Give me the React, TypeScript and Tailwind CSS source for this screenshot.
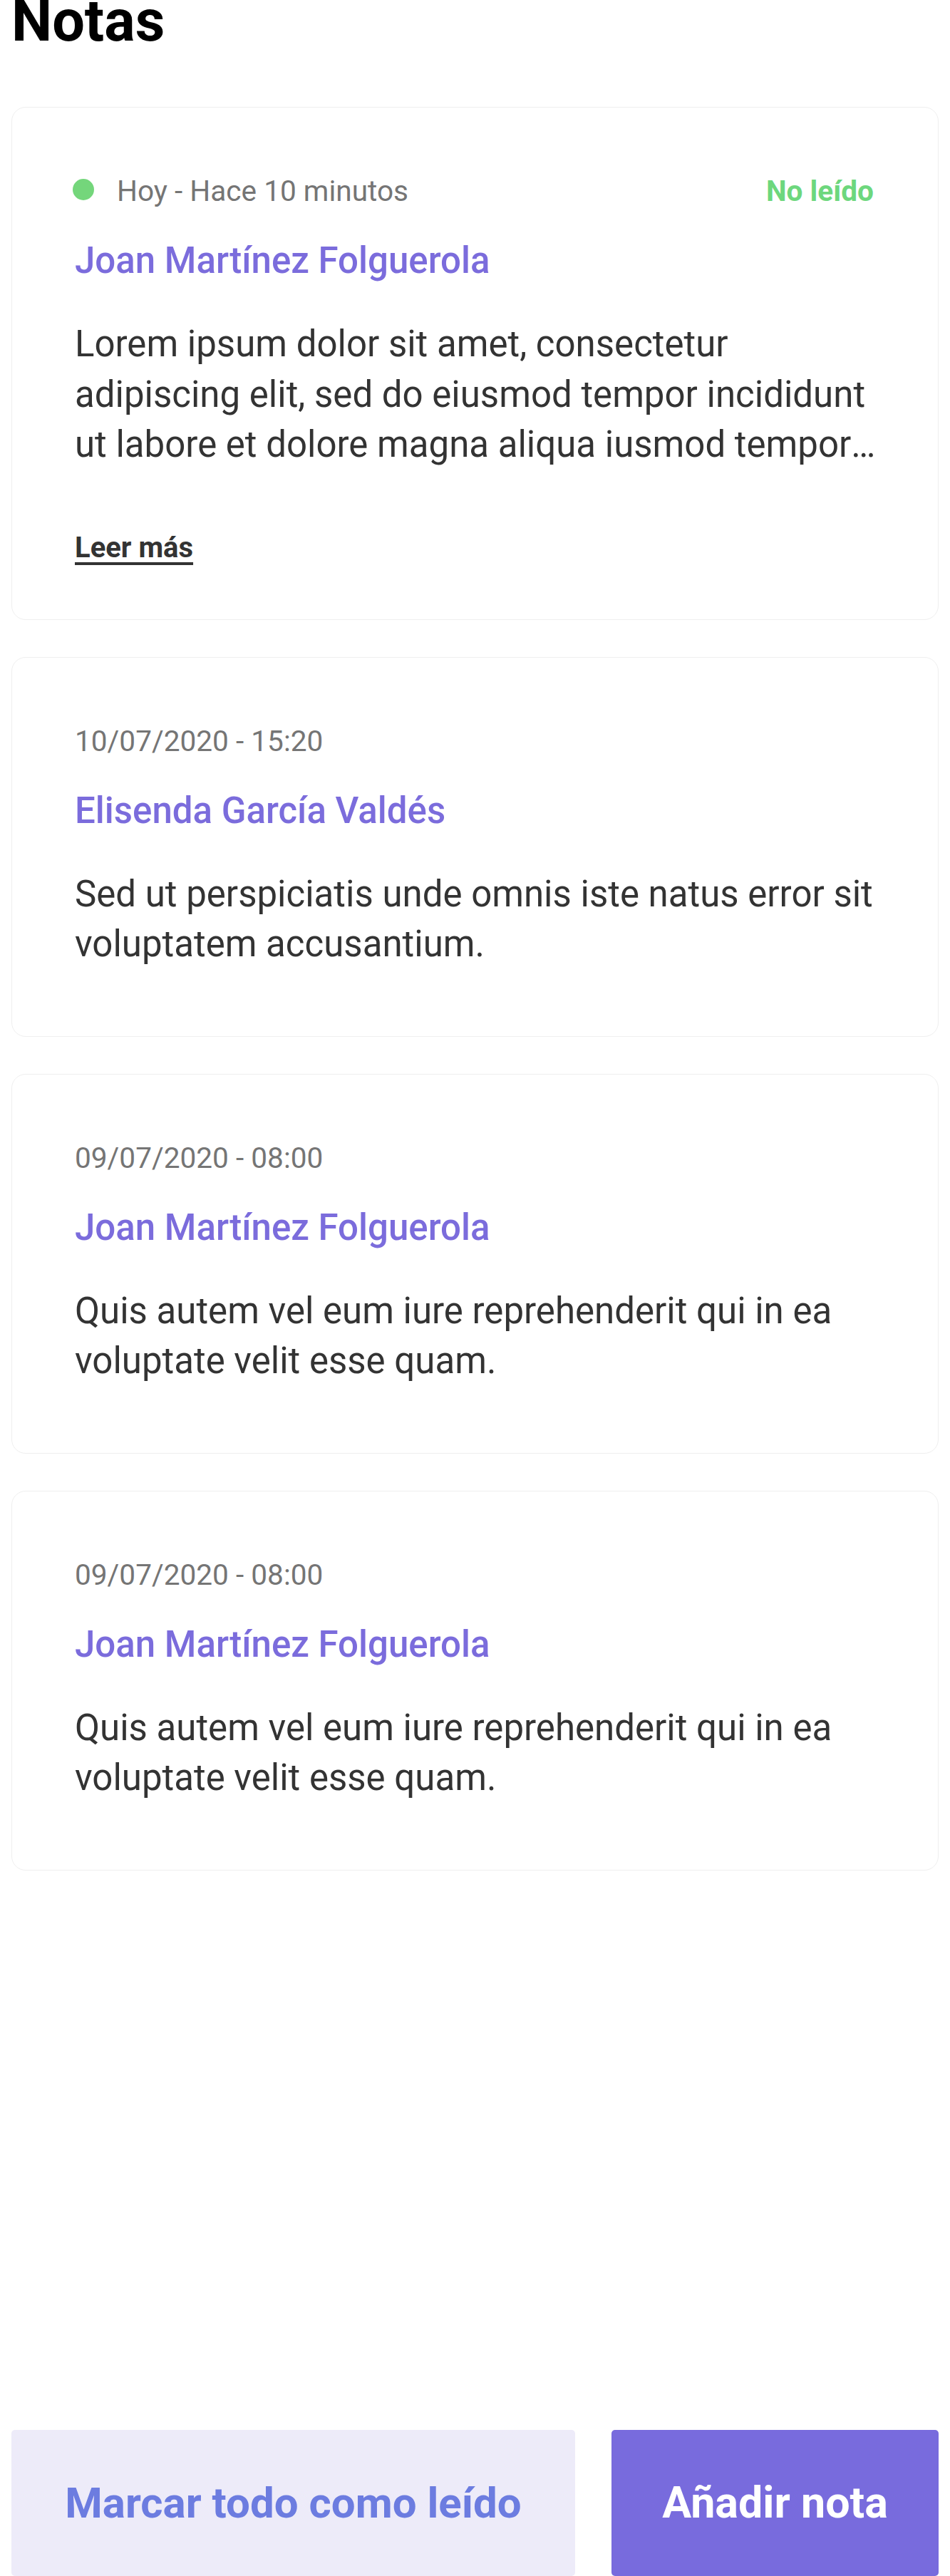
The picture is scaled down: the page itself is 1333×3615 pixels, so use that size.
import React from "react";

type Note = {
  date: string;
  author: string;
  text: string;
  unread?: boolean;
};

const notes: Note[] = [
  {
    date: "Hoy - Hace 10 minutos",
    author: "Joan Martínez Folguerola",
    text: "Lorem ipsum dolor sit amet, consectetur adipiscing elit, sed do eiusmod tempor incididunt ut labore et dolore magna aliqua iusmod tempor incididunt ut labore et dolore magna aliqua.",
    unread: true,
  },
  {
    date: "10/07/2020 - 15:20",
    author: "Elisenda García Valdés",
    text: "Sed ut perspiciatis unde omnis iste natus error sit voluptatem accusantium.",
  },
  {
    date: "09/07/2020 - 08:00",
    author: "Joan Martínez Folguerola",
    text: "Quis autem vel eum iure reprehenderit qui in ea voluptate velit esse quam.",
  },
  {
    date: "09/07/2020 - 08:00",
    author: "Joan Martínez Folguerola",
    text: "Quis autem vel eum iure reprehenderit qui in ea voluptate velit esse quam.",
  },
];

const NoteCard = (props: { note: Note }) => {
  const { note } = props;
  return (
    <div className="rounded-[20px] border border-[#efefef] bg-white pl-[88px] pr-[90px] pt-[93px] pb-[93px]">
      <div className="flex items-center justify-between text-[40.6px] leading-[48px]">
        <div className="flex items-center">
          {note.unread && (
            <span className="-ml-[3px] mr-[32px] block h-[30px] w-[30px] -translate-y-[2px] rounded-full bg-[#74d67b]" />
          )}
          <span className="text-[#757575]">{note.date}</span>
        </div>
        {note.unread && (
          <span className="font-bold text-[#6dd77d]">No leído</span>
        )}
      </div>
      <div className="mt-[44px] text-[51px] font-medium leading-[60px] text-[#7b6cdc]">
        {note.author}
      </div>
      <p className="-mr-[15px] mt-[52px] line-clamp-3 text-[51px] leading-[70.5px] text-[#333333]">
        {note.text}
      </p>
      {note.unread && (
        <div className="-mb-[16px] mt-[86px] text-[40px] leading-[46px]">
          <a
            href="#"
            className="font-bold text-[#333333] underline decoration-[4px] underline-offset-[7px]"
          >
            Leer más
          </a>
        </div>
      )}
    </div>
  );
};

export default function App() {
  return (
    <div
      className="flex h-[3615px] flex-col overflow-hidden bg-white"
      style={{ fontFamily: "Roboto, 'Noto Sans', sans-serif" }}
    >
      <h1 className="-mt-[11px] pl-[16px] text-[81px] font-bold leading-none text-black">
        Notas
      </h1>
      <div className="mt-[80px] flex flex-col gap-[52px] px-[16px]">
        {notes.map((note, i) => (
          <NoteCard note={note} key={"note" + i} />
        ))}
      </div>
      <div className="mt-auto flex gap-[51px] px-[16px]">
        <button className="flex h-[205px] w-[791px] items-center justify-center rounded-[5px] bg-[#edebf9] text-[60px] font-bold text-[#6c7ce0]">
          Marcar todo como leído
        </button>
        <button className="flex h-[205px] flex-1 items-center justify-center rounded-[5px] bg-[#786bdd] text-[61px] font-bold text-white">
          Añadir nota
        </button>
      </div>
    </div>
  );
}
